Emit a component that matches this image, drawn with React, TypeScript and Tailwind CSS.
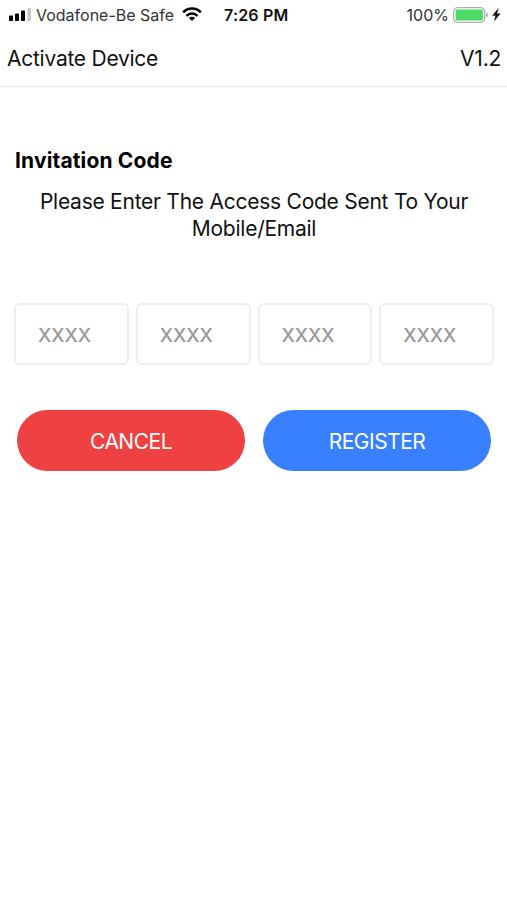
import { useState } from 'react';

const FIELDS = [0, 1, 2, 3];

function SignalIcon() {
  return (
    <svg width="22" height="14" viewBox="0 0 22 14" className="shrink-0">
      <rect x="0" y="7.4" width="4" height="5.6" rx="0.8" fill="#000" />
      <rect x="6" y="5.4" width="4" height="7.6" rx="0.8" fill="#000" />
      <rect x="12" y="2.6" width="4" height="10.4" rx="0.8" fill="#000" />
      <rect x="18.4" y="0" width="3.6" height="13" rx="0.8" fill="#c8c8c8" />
    </svg>
  );
}

function WifiIcon() {
  return (
    <svg width="20" height="14" viewBox="0 0 20 14" fill="none" stroke="#000" strokeWidth="2.5" className="shrink-0">
      <path d="M1.2 5.3C6 0.2 14 0.2 18.8 5.3" />
      <path d="M4.5 8.8C7.5 5.7 12.5 5.7 15.5 8.8" />
      <path d="M10 13.9L6.9 10.9C8.6 9.2 11.4 9.2 13.1 10.9Z" fill="#000" stroke="none" />
    </svg>
  );
}

function BatteryIcon() {
  return (
    <svg width="48" height="16" viewBox="0 0 48 16" className="shrink-0">
      <rect x="0.7" y="0.7" width="31" height="14.6" rx="3.5" fill="#fff" stroke="#9a9a9a" />
      <rect x="2.6" y="2.6" width="27.2" height="10.8" rx="1.2" fill="#4cd964" />
      <path d="M33.3 5.5C35.3 6 35.3 10 33.3 10.5Z" fill="#9a9a9a" />
      <path d="M45.2 1.5L39.6 8.5H42.6L41.4 13.7L47.2 6.7H43.8Z" fill="#111" stroke="#111" strokeWidth="0.4" />
    </svg>
  );
}

export default function App() {
  const [codes, setCodes] = useState(['', '', '', '']);

  const handleChange = (index: number, value: string) => {
    setCodes(codes.map((code, i) => (i === index ? value : code)));
  };

  return (
    <div className="min-h-screen bg-white font-['Inter',sans-serif] text-[#111]">
      {/* Status bar */}
      <div className="flex h-[30px] items-center pl-[9px] pr-[6px] text-[16px]">
        <SignalIcon />
        <span className="ml-[5px] w-[139px] whitespace-nowrap text-[#333]">Vodafone-Be Safe</span>
        <span className="ml-[7px] flex pb-[2px]"><WifiIcon /></span>
        <span className="ml-[22px] whitespace-nowrap font-semibold tracking-[0.2px]">7:26 PM</span>
        <span className="ml-auto mr-[4px] text-[#333]">100%</span>
        <BatteryIcon />
      </div>

      {/* Header */}
      <header className="flex h-[57px] items-center justify-between border-b border-[#e5e5e5] pl-[7px] pr-[6px] pt-[2px] text-[21px] tracking-[-0.25px]">
        <h1>Activate Device</h1>
        <span>V1.2</span>
      </header>

      <main className="pl-[14px] pr-[13px] pt-[60px]">
        <h2 className="pl-px text-[21px] font-bold leading-[27px] tracking-[0.15px] text-black">Invitation Code</h2>
        <p className="mt-[14px] text-center text-[21px] leading-[27px] tracking-[-0.25px]">
          Please Enter The Access Code Sent To Your
          <br />
          Mobile/Email
        </p>

        {/* Access code */}
        <div className="mt-[61px] grid grid-cols-4 gap-[7px]">
          {FIELDS.map((index) => (
            <input
              key={index}
              value={codes[index]}
              onChange={(e) => handleChange(index, e.target.value)}
              placeholder="XXXX"
              maxLength={4}
              className="h-[62px] w-full rounded-[6px] border-2 border-[#eceff0] px-[22px] pt-[2px] text-[19px] font-medium tracking-[-0.1px] placeholder:text-[#999]"
            />
          ))}
        </div>

        {/* Actions */}
        <div className="mt-[45px] grid grid-cols-2 gap-[18px] px-[3px] text-[21px] tracking-[-0.5px] text-white">
          <button className="h-[61px] rounded-full bg-[#ef4141] pt-[2px]">CANCEL</button>
          <button className="h-[61px] rounded-full bg-[#3880ff] pt-[2px]">REGISTER</button>
        </div>
      </main>
    </div>
  );
}
